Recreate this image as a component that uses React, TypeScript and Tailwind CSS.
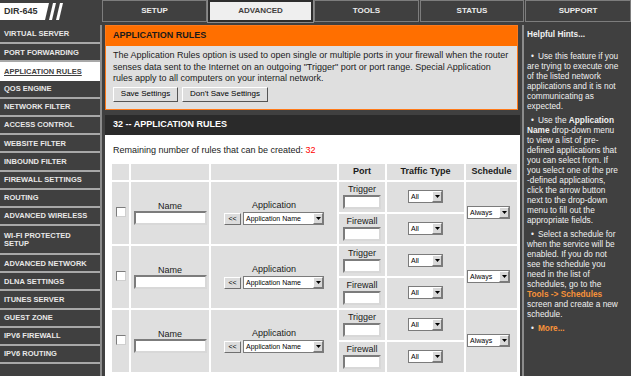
import React from 'react';

const tabs = [
  { label: 'SETUP', width: 'w-[105px]' },
  { label: 'ADVANCED', width: 'w-[105px]', active: true },
  { label: 'TOOLS', width: 'w-[105px]' },
  { label: 'STATUS', width: 'w-[104px]' },
  { label: 'SUPPORT', width: 'w-[106px]' },
];

const sideLinks = [
  'VIRTUAL SERVER',
  'PORT FORWARDING',
  'APPLICATION RULES',
  'QOS ENGINE',
  'NETWORK FILTER',
  'ACCESS CONTROL',
  'WEBSITE FILTER',
  'INBOUND FILTER',
  'FIREWALL SETTINGS',
  'ROUTING',
  'ADVANCED WIRELESS',
  'WI-FI PROTECTED SETUP',
  'ADVANCED NETWORK',
  'DLNA SETTINGS',
  'ITUNES SERVER',
  'GUEST ZONE',
  'IPV6 FIREWALL',
  'IPV6 ROUTING',
];

const cell = 'bg-[#dfdfdf] p-0 text-center align-middle';

const DropDown: React.FC<{ label: string; width: string }> = ({ label, width }) => (
  <div className={`${width} h-[13px] flex bg-white border border-[#7b7b7b] text-[7px] leading-[11px] text-black text-left`}>
    <span className="flex-1 pl-[2px] overflow-hidden whitespace-nowrap">{label}</span>
    <span className="w-[10px] h-full flex items-center justify-center bg-[#d8d8d8] border border-t-white border-l-white border-b-[#7a7a7a] border-r-[#7a7a7a]">
      <svg width="5" height="3" viewBox="0 0 5 3">
        <path d="M0 0h5L2.5 3z" fill="#000" />
      </svg>
    </span>
  </div>
);

const TextBox: React.FC<{ width: string }> = ({ width }) => (
  <input
    type="text"
    readOnly
    className={`${width} h-[14px] bg-white border-2 border-t-[#7c7c7c] border-l-[#7c7c7c] border-b-[#d8d8d8] border-r-[#d8d8d8]`}
  />
);

const RuleRow = () => (
  <>
    <tr>
      <td rowSpan={2} className={cell}>
        <span className="inline-block w-[10px] h-[10px] bg-white border border-t-[#7c7c7c] border-l-[#7c7c7c] border-b-[#cfcfcf] border-r-[#cfcfcf] align-middle" />
      </td>
      <td rowSpan={2} className={cell}>
        <div className="flex flex-col items-center">
          <span className="leading-[10px]">Name</span>
          <TextBox width="w-[73px]" />
        </div>
      </td>
      <td rowSpan={2} className={cell}>
        <div className="flex flex-col items-center">
          <span className="leading-[11px]">Application</span>
          <div className="flex items-center gap-[2px] mt-[1px]">
            <button className="w-[17px] h-[12px] bg-[#dcdcdc] border border-t-white border-l-white border-b-[#6f6f6f] border-r-[#6f6f6f] text-[7px] leading-[9px] text-black">
              &lt;&lt;
            </button>
            <DropDown label="Application Name" width="w-[81px]" />
          </div>
        </div>
      </td>
      <td className={`${cell} h-[30px]`}>
        <div className="flex flex-col items-center">
          <span className="leading-[11px]">Trigger</span>
          <TextBox width="w-[38px]" />
        </div>
      </td>
      <td className={cell}>
        <div className="flex justify-center">
          <DropDown label="All" width="w-[35px]" />
        </div>
      </td>
      <td rowSpan={2} className={cell}>
        <div className="flex pl-[1px]">
          <DropDown label="Always" width="w-[43px]" />
        </div>
      </td>
    </tr>
    <tr>
      <td className={`${cell} h-[30px]`}>
        <div className="flex flex-col items-center">
          <span className="leading-[11px]">Firewall</span>
          <TextBox width="w-[38px]" />
        </div>
      </td>
      <td className={cell}>
        <div className="flex justify-center">
          <DropDown label="All" width="w-[35px]" />
        </div>
      </td>
    </tr>
  </>
);

const App: React.FC = () => {
  return (
    <div className="w-[631px] h-[376px] overflow-hidden bg-[#404040] font-['Liberation_Sans',Arial,sans-serif]">
      {/* top bar */}
      <div className="flex h-[22px]">
        <div className="w-[102px] flex items-start pt-[3px]">
          <div className="w-[45px] h-[17px] bg-white pl-[4px] text-[9px] font-bold leading-[17px] text-[#333]">
            DIR-645
          </div>
          <svg width="20" height="17" viewBox="0 0 20 17">
            <polygon points="0,0 4,0 0,17" fill="#fff" />
            <polygon points="8,0 11,0 7,17 4,17" fill="#fff" />
            <polygon points="15,0 18,0 14,17 11,17" fill="#fff" />
          </svg>
        </div>
        <div className="flex gap-[1px]">
          {tabs.map((t) =>
            t.active ? (
              <div
                key={t.label}
                className={`${t.width} h-[22px] flex items-center justify-center bg-[#efefef] border-2 border-[#2e2e2e] outline outline-1 outline-[#8a8a8a] text-[8px] font-bold text-[#404040]`}
              >
                {t.label}
              </div>
            ) : (
              <div
                key={t.label}
                className={`${t.width} h-[22px] flex items-center justify-center border border-[#7d7d7d] text-[8px] font-bold text-[#ececec]`}
              >
                {t.label}
              </div>
            )
          )}
        </div>
      </div>

      <div className="flex mt-[3px]">
        {/* sidebar */}
        <div className="w-[102px] border-r-2 border-[#8c8c8c] h-[360px] pt-[1px]">
          {sideLinks.map((l) =>
            l === 'APPLICATION RULES' ? (
              <div key={l} className="h-[18.2px] bg-white pl-[4px] flex items-center text-[7.5px] font-bold text-[#404040] underline">
                {l}
              </div>
            ) : l === 'WI-FI PROTECTED SETUP' ? (
              <div key={l} className="h-[29px] border-b-2 border-[#a8a8a8] pl-[4px] flex items-center text-[7.5px] font-bold leading-[8px] text-[#e8e8e8]">
                <span>
                  WI-FI PROTECTED
                  <br />
                  SETUP
                </span>
              </div>
            ) : (
              <div key={l} className="h-[18.2px] border-b-2 border-[#a8a8a8] pl-[4px] flex items-center text-[7.5px] font-bold text-[#e8e8e8]">
                {l}
              </div>
            )
          )}
        </div>

        {/* main */}
        <div className="w-[420px] pl-[3px]">
          <div className="w-[413px] border border-[#ff7a1a] bg-[#dfdfdf]">
            <div className="h-[20px] bg-[#ff6f00] pl-[7px] flex items-center text-[9px] font-bold text-[#1a1a1a]">
              APPLICATION RULES
            </div>
            <div className="px-[7px] pt-[4px] pb-[7px]">
              <p className="text-[9px] leading-[11.5px] text-[#1a1a1a] whitespace-nowrap">
                The Application Rules option is used to open single or multiple ports in your firewall when the router
                <br />
                senses data sent to the Internet on an outgoing "Trigger" port or port range. Special Application
                <br />
                rules apply to all computers on your internal network.
              </p>
              <div className="flex gap-[4px] mt-[2px]">
                <button className="w-[65px] h-[15px] bg-[#dedede] border border-t-white border-l-white border-b-[#555] border-r-[#555] text-[8px] text-black">
                  Save Settings
                </button>
                <button className="w-[86px] h-[15px] bg-[#dedede] border border-t-white border-l-white border-b-[#555] border-r-[#555] text-[8px] text-black">
                  Don't Save Settings
                </button>
              </div>
            </div>
          </div>

          <div className="w-[415px] mt-[5px] bg-white">
            <div className="h-[20px] bg-[#2a2a2a] pl-[8px] flex items-center text-[9px] font-bold text-white">
              32 -- APPLICATION RULES
            </div>
            <div className="px-[5px] pt-[10px] pb-[20px]">
              <p className="text-[9px] leading-[11px] text-[#1a1a1a] pl-[3px]">
                Remaining number of rules that can be created: <span className="text-[#ff0000]">32</span>
              </p>
              <table className="mt-[6px] w-[409px] table-fixed border-separate border-spacing-[2px] text-[9px] text-[#1a1a1a]">
                <thead>
                  <tr>
                    <th className={`${cell} h-[16px] w-[17px]`} />
                    <th className={`${cell} w-[78px]`} />
                    <th className={`${cell} w-[126px]`} />
                    <th className={`${cell} w-[46px] font-bold`}>Port</th>
                    <th className={`${cell} w-[77px] font-bold`}>Traffic Type</th>
                    <th className={`${cell} w-[51px] font-bold`}>Schedule</th>
                  </tr>
                </thead>
                <tbody>
                  <RuleRow />
                  <RuleRow />
                  <RuleRow />
                </tbody>
              </table>
            </div>
          </div>
        </div>

        {/* hints */}
        <div className="w-[109px] border-l-2 border-[#8c8c8c] pl-[3px] pt-[4px] text-[8.3px] leading-[10px] text-[#f0f0f0] whitespace-nowrap">
          <p className="font-bold">Helpful Hints...</p>
          <p className="mt-[12px]">
            <span className="ml-[4px] mr-[4px]">•</span>Use this feature if you
            <br />
            are trying to execute one
            <br />
            of the listed network
            <br />
            applications and it is not
            <br />
            communicating as
            <br />
            expected.
          </p>
          <p className="mt-[4px]">
            <span className="ml-[4px] mr-[4px]">•</span>Use the <b>Application</b>
            <br />
            <b>Name</b> drop-down menu
            <br />
            to view a list of pre-
            <br />
            defined applications that
            <br />
            you can select from. If
            <br />
            you select one of the pre
            <br />
            -defined applications,
            <br />
            click the arrow button
            <br />
            next to the drop-down
            <br />
            menu to fill out the
            <br />
            appropriate fields.
          </p>
          <p className="mt-[4px]">
            <span className="ml-[4px] mr-[4px]">•</span>Select a schedule for
            <br />
            when the service will be
            <br />
            enabled. If you do not
            <br />
            see the schedule you
            <br />
            need in the list of
            <br />
            schedules, go to the
            <br />
            <b className="text-[#f7923a]">Tools -&gt; Schedules</b>
            <br />
            screen and create a new
            <br />
            schedule.
          </p>
          <p className="mt-[4px]">
            <span className="ml-[4px] mr-[4px]">•</span>
            <b className="text-[#f7923a]">More...</b>
          </p>
        </div>
      </div>
    </div>
  );
};

export default App;
